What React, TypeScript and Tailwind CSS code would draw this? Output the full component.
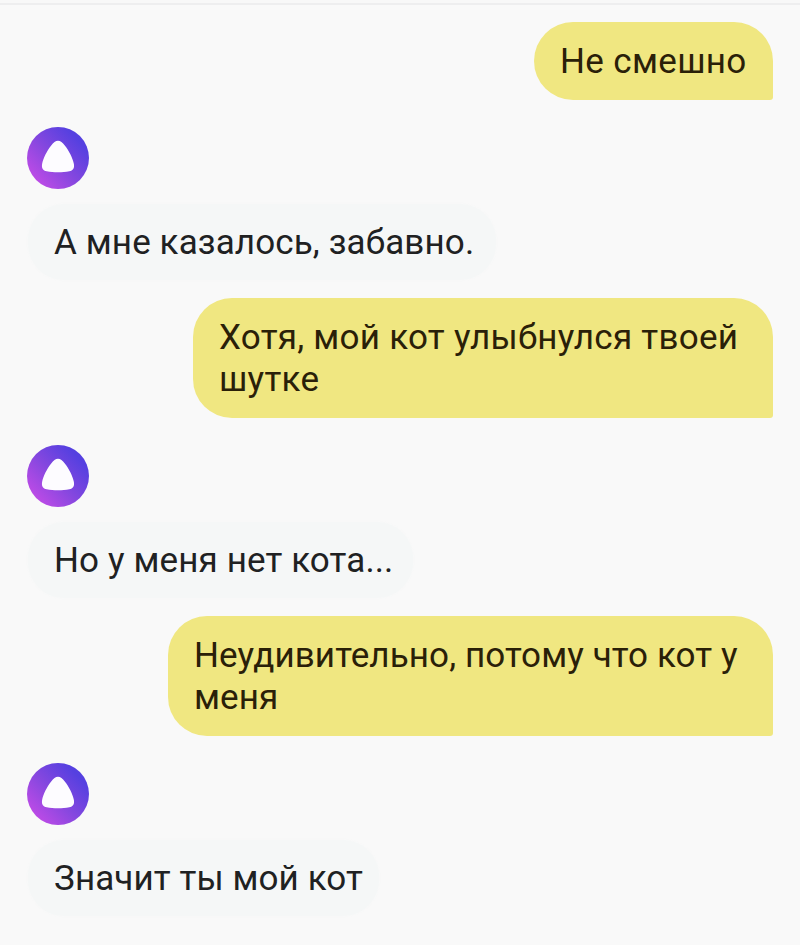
type MessageType = {
    id: number;
    author: "user" | "alice";
    lines: string[];
    width: string;
    tracking: string;
};

const MESSAGES: MessageType[] = [
    {
        id: 1,
        author: "user",
        lines: ["Не смешно"],
        width: "w-[239px]",
        tracking: "tracking-[0.35px]",
    },
    {
        id: 2,
        author: "alice",
        lines: ["А мне казалось, забавно."],
        width: "w-[468px]",
        tracking: "tracking-[0.12px]",
    },
    {
        id: 3,
        author: "user",
        lines: ["Хотя, мой кот улыбнулся твоей", "шутке"],
        width: "w-[580px]",
        tracking: "tracking-[0.26px]",
    },
    {
        id: 4,
        author: "alice",
        lines: ["Но у меня нет кота..."],
        width: "w-[385px]",
        tracking: "tracking-[0.12px]",
    },
    {
        id: 5,
        author: "user",
        lines: ["Неудивительно, потому что кот у", "меня"],
        width: "w-[605px]",
        tracking: "tracking-[0.1px]",
    },
    {
        id: 6,
        author: "alice",
        lines: ["Значит ты мой кот"],
        width: "w-[351px]",
        tracking: "tracking-[0.1px]",
    },
];

function Avatar() {
    return (
        <svg viewBox="0 0 62 62" className="block size-[62px]">
            <defs>
                <linearGradient id="alice" x1="0.12" y1="0.85" x2="0.82" y2="0.2">
                    <stop offset="0" stopColor="#bd4be6" />
                    <stop offset="0.5" stopColor="#8547df" />
                    <stop offset="1" stopColor="#5540e0" />
                </linearGradient>
            </defs>
            <circle cx="31" cy="31" r="31" fill="url(#alice)" />
            <path
                d="M31 13.8C33.4 13.8 35.6 15.6 37.8 18.4C42 23.8 45.8 31 46.9 37C47.6 41.6 46 43.5 42.3 44.2C35.5 45.5 26.5 45.5 19.7 44.2C16 43.5 14.4 41.6 15.1 37C16.2 31 20 23.8 24.2 18.4C26.4 15.6 28.6 13.8 31 13.8Z"
                fill="#fdfcff"
            />
        </svg>
    );
}

function renderLines(lines: string[]) {
    return lines.map((line) => (
        <p key={line} className="whitespace-nowrap">
            {line}
        </p>
    ));
}

function UserMessage({ message }: { message: MessageType }) {
    return (
        <div
            className={`${message.width} ${message.tracking} self-end rounded-[39px] rounded-br-[3px] bg-[#f0e781] pt-[19px] pb-[17px] pl-[26px] text-[#2a2008]`}
        >
            {renderLines(message.lines)}
        </div>
    );
}

function AliceMessage({ message }: { message: MessageType }) {
    return (
        <div className="mt-[27px] mb-[18px] flex flex-col items-start gap-[15px]">
            <Avatar />
            <div
                className={`${message.width} ${message.tracking} ml-px rounded-[36px] bg-[#f5f7f7] pt-[18px] pb-4 pl-[26px] text-[#202122] shadow-[0_0_3px_#f6f7f7]`}
            >
                {renderLines(message.lines)}
            </div>
        </div>
    );
}

export default function App() {
    return (
        <div className="h-[945px] w-full overflow-hidden bg-[#f9f9f9]">
            <div className="h-[3px] bg-[#f8f8f8]" />
            <div className="h-[2px] bg-[#eeeeef]" />
            <div className="flex flex-col pt-[17px] pr-[27px] pl-[27px] font-[Roboto,sans-serif] text-[35px] leading-[42px]">
                {MESSAGES.map((message) =>
                    message.author === "user" ? (
                        <UserMessage key={message.id} message={message} />
                    ) : (
                        <AliceMessage key={message.id} message={message} />
                    )
                )}
            </div>
        </div>
    );
}
